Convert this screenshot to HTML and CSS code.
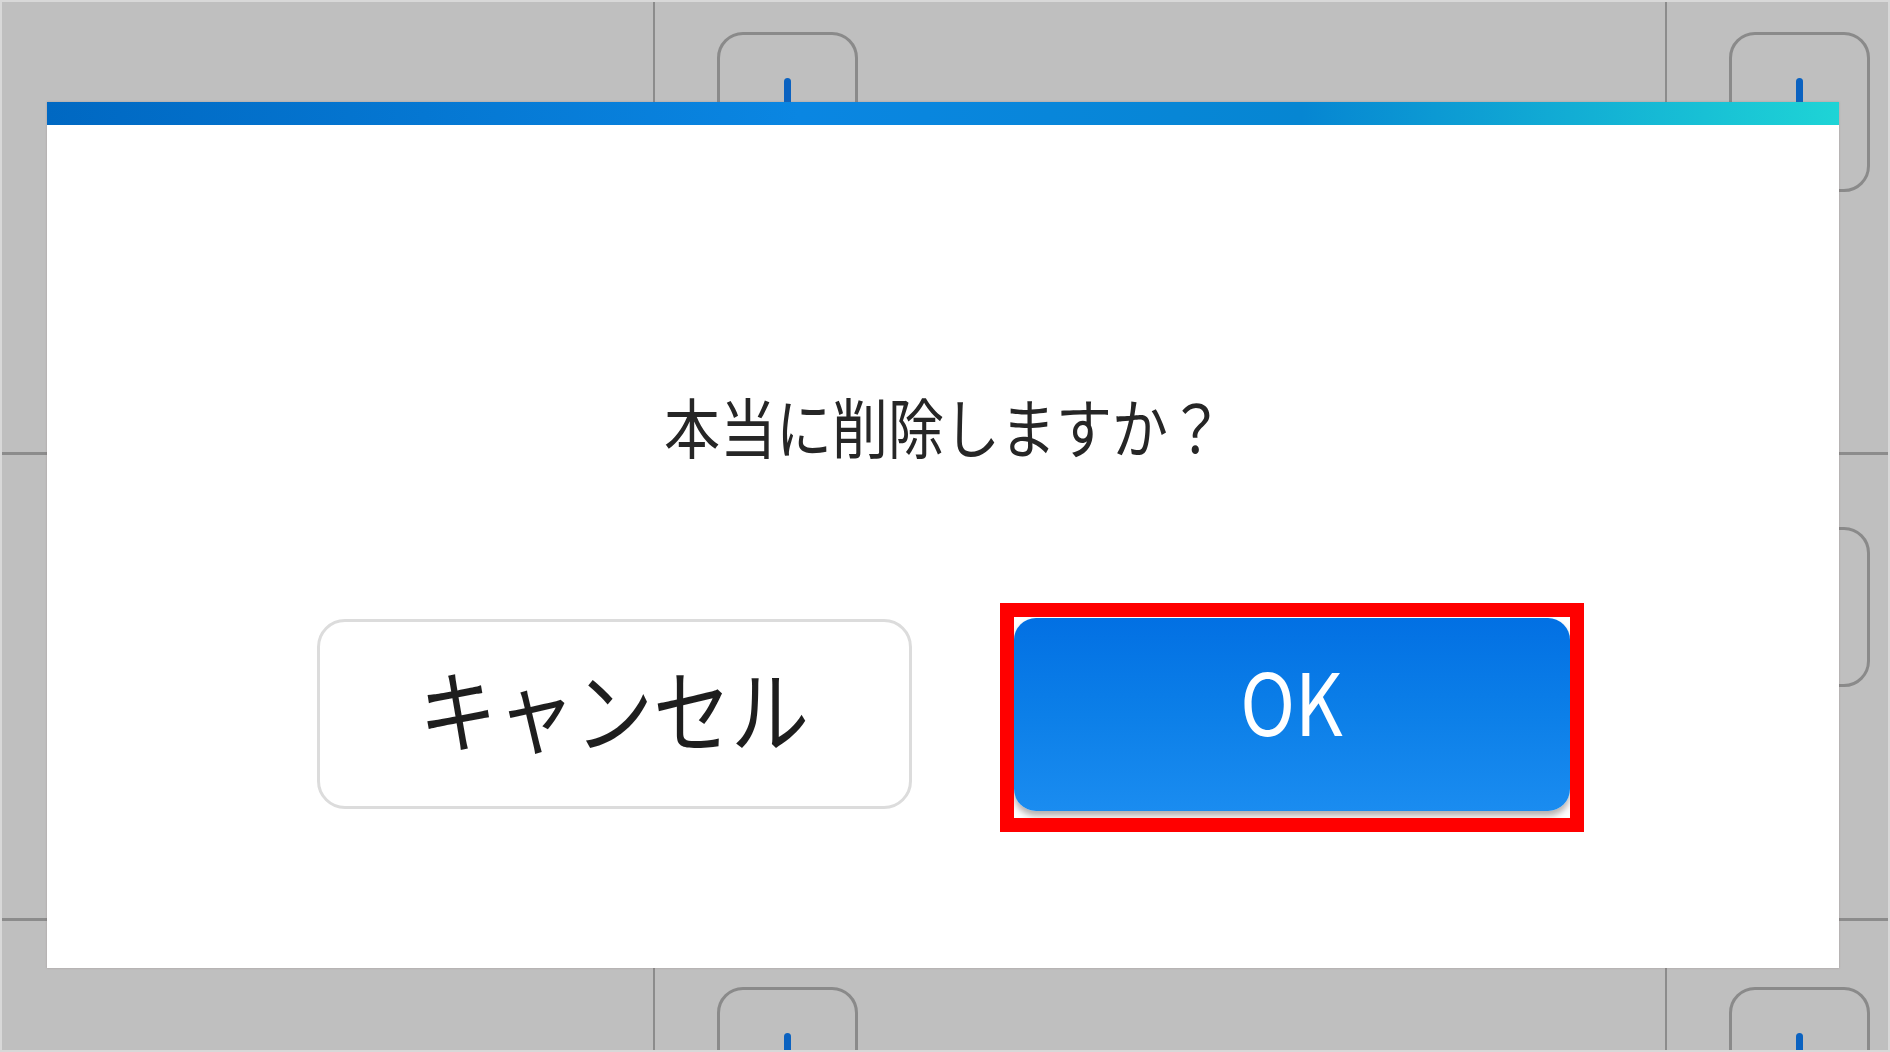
FILE: index.html
```html
<!DOCTYPE html>
<html lang="ja">
<head>
<meta charset="utf-8">
<title>削除確認</title>
<link rel="stylesheet" href="styles.css">
</head>
<body>
<div class="screen">
  <div class="board">
    <div class="cell row1 colA"></div>
    <div class="cell row1 colB"><div class="tab"><span class="tick"></span></div></div>
    <div class="cell row1 colC"><div class="tab"><span class="tick"></span></div></div>
    <div class="cell row2 colA"></div>
    <div class="cell row2 colB"><div class="tab"><span class="tick"></span></div></div>
    <div class="cell row2 colC"><div class="tab"><span class="tick"></span></div></div>
    <div class="cell row3 colA"></div>
    <div class="cell row3 colB"><div class="tab"><span class="tick"></span></div></div>
    <div class="cell row3 colC"><div class="tab"><span class="tick"></span></div></div>
  </div>

  <div class="dialog" role="dialog">
    <div class="dialog-bar"></div>
    <div class="dialog-body">
      <p class="message"><span class="tall">本当に削除しますか？</span></p>
      <div class="actions">
        <button class="btn btn-cancel" type="button"><span class="tall">キャンセル</span></button>
        <div class="highlight">
          <button class="btn btn-ok" type="button"><span class="tall">OK</span></button>
        </div>
      </div>
    </div>
  </div>
</div>
</body>
</html>
```
FILE: styles.css
```css
* { box-sizing: border-box; }
html, body {
  margin: 0;
  padding: 0;
  width: 1890px;
  height: 1052px;
  overflow: hidden;
  font-family: "Noto Sans CJK JP", "Noto Sans", sans-serif;
}
.screen {
  position: relative;
  width: 1890px;
  height: 1052px;
  background: #bfbfbf;
  border: 2px solid #d8d8d8;
  overflow: hidden;
}
.board {
  display: grid;
  grid-template-columns: 653px 1012px 1fr;
  grid-template-rows: 453px 466px 1fr;
  height: 100%;
}
.cell {
  border-bottom: 3px solid #8c8c8c;
  padding-left: 62px;
  overflow: hidden;
}
.row3 { border-bottom: none; }
.colA, .colB { border-right: 2px solid #8c8c8c; }
.colA { padding-left: 0; }
.row1 { padding-top: 30px; }
.row2 { padding-top: 72px; }
.row3 { padding-top: 66px; }
.tab {
  width: 141px;
  height: 160px;
  border: 3px solid #8a8a8a;
  border-radius: 26px;
  display: flex;
  justify-content: center;
  padding-top: 43px;
}
.tick {
  display: block;
  width: 7px;
  height: 70px;
  background: #0b62c0;
  border-radius: 4px 4px 0 0;
}

.dialog {
  position: absolute;
  left: 45px;
  top: 100px;
  width: 1792px;
  height: 866px;
  background: #ffffff;
  box-shadow: 0 0 2px rgba(120, 90, 90, 0.35);
}
.dialog-bar {
  height: 23px;
  background: linear-gradient(90deg, #0068c2 0%, #0a86e2 42%, #0686d2 70%, #1ed4d6 100%);
}
.dialog-body {
  display: flex;
  flex-direction: column;
  align-items: center;
}
.message {
  margin: 270px 0 0 0;
  font-size: 56px;
  line-height: 60px;
  color: #262626;
  padding-left: 2px;
}
.tall {
  display: inline-block;
  transform: scaleY(1.16);
}
.actions {
  display: flex;
  align-items: flex-start;
  gap: 102px;
  margin-top: 162px;
}
.btn {
  font-family: "Noto Sans CJK JP", "Noto Sans", sans-serif;
  border: none;
  padding: 0;
  cursor: pointer;
  display: flex;
  align-items: center;
  justify-content: center;
}
.btn-cancel {
  margin-top: 2px;
  width: 595px;
  height: 190px;
  background: #ffffff;
  border: 3px solid #dcdcdc;
  border-radius: 28px;
  font-size: 78px;
  color: #1e1e1e;
  padding-bottom: 14px;
}
.highlight {
  width: 556px;
  height: 201px;
  outline: 14px solid #ff0000;
  padding-top: 1px;
}
.btn-ok {
  width: 556px;
  height: 193px;
  border-radius: 22px;
  background: linear-gradient(180deg, #0270e3 0%, #0c7fe8 50%, #1a8cf0 100%);
  box-shadow: 0 5px 6px rgba(90, 80, 80, 0.45);
  color: #ffffff;
  font-size: 74px;
  padding-bottom: 32px;
}
```
